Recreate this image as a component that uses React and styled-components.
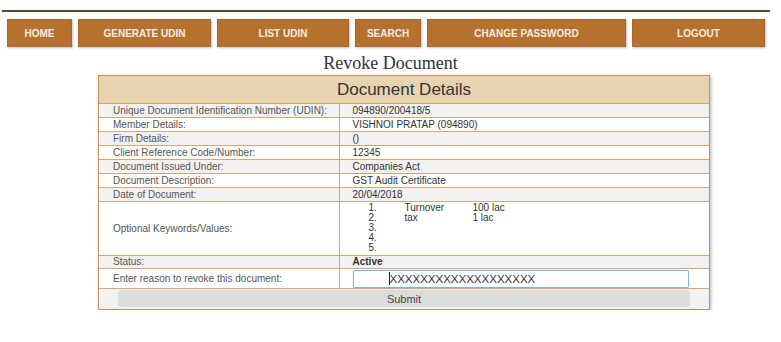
import styled, { createGlobalStyle } from 'styled-components';

const GlobalStyle = createGlobalStyle`
  body {
    margin: 0;
    background: #fff;
    font-family: "Liberation Sans", Arial, sans-serif;
  }
`;

const menu = [
  { label: 'HOME', width: 65 },
  { label: 'GENERATE UDIN', width: 133 },
  { label: 'LIST UDIN', width: 132 },
  { label: 'SEARCH', width: 66 },
  { label: 'CHANGE PASSWORD', width: 199 },
  { label: 'LOGOUT', width: 133 },
];

const details = [
  ['Unique Document Identification Number (UDIN):', '094890/200418/5'],
  ['Member Details:', 'VISHNOI PRATAP (094890)'],
  ['Firm Details:', '()'],
  ['Client Reference Code/Number:', '12345'],
  ['Document Issued Under:', 'Companies Act'],
  ['Document Description:', 'GST Audit Certificate'],
  ['Date of Document:', '20/04/2018'],
];

const keywords = [
  ['Turnover', '100 lac'],
  ['tax', '1 lac'],
  ['', ''],
  ['', ''],
  ['', ''],
];

export default function App() {
  return (
    <Page>
      <GlobalStyle />
      <HeaderLine />
      <Nav>
        {menu.map((m) => (
          <NavButton key={m.label} $w={m.width}>{m.label}</NavButton>
        ))}
      </Nav>
      <PageTitle>Revoke Document</PageTitle>
      <Panel>
        <Table>
          <colgroup>
            <col style={{ width: 240 }} />
            <col />
          </colgroup>
          <tbody>
            <tr>
              <HeadCell colSpan={2}>Document Details</HeadCell>
            </tr>
            {details.map(([label, value], i) => (
              <Row key={label} $alt={i % 2 === 0}>
                <Label>{label}</Label>
                <Value>{value}</Value>
              </Row>
            ))}
            <Row>
              <Label>Optional Keywords/Values:</Label>
              <Value>
                <KeyList>
                  {keywords.map(([k, v], i) => (
                    <KeyItem key={i}>
                      <KeyNum>{i + 1}.</KeyNum>
                      <KeyName>{k}</KeyName>
                      <span>{v}</span>
                    </KeyItem>
                  ))}
                </KeyList>
              </Value>
            </Row>
            <Row $alt $h={13}>
              <Label>Status:</Label>
              <Value><strong>Active</strong></Value>
            </Row>
            <Row $h={20}>
              <Label>Enter reason to revoke this document:</Label>
              <Value>
                <ReasonBox>
                  <Caret />XXXXXXXXXXXXXXXXXXX
                </ReasonBox>
              </Value>
            </Row>
            <Row $alt $h={20}>
              <SubmitCell colSpan={2}>
                <SubmitButton>Submit</SubmitButton>
              </SubmitCell>
            </Row>
          </tbody>
        </Table>
      </Panel>
    </Page>
  );
}

const Page = styled.div`
  padding-top: 10px;
  width: 781px;
`;

const HeaderLine = styled.div`
  height: 2px;
  margin: 0 11px 0 2px;
  background: #5c4a35;
`;

const Nav = styled.div`
  display: flex;
  gap: 6px;
  padding: 7px 0 0 7px;
`;

const NavButton = styled.div`
  width: ${(p) => p.$w}px;
  height: 28px;
  box-sizing: border-box;
  display: flex;
  align-items: center;
  justify-content: center;
  background: #b6712f;
  border: 1px solid #a9672b;
  box-shadow: 1px 1px 2px rgba(0, 0, 0, 0.25);
  color: #f6ece2;
  font-size: 10px;
  font-weight: bold;
`;

const PageTitle = styled.h1`
  margin: 6px 0 0;
  text-align: center;
  font-family: "Liberation Serif", "Times New Roman", serif;
  font-weight: normal;
  font-size: 18px;
  line-height: 21px;
  color: #333;
`;

const Panel = styled.div`
  width: 612px;
  margin: 1px 0 0 98px;
  border: 1px solid #c8915a;
  box-shadow: 1px 1px 3px rgba(0, 0, 0, 0.3);
  box-sizing: border-box;
`;

const Table = styled.table`
  width: 100%;
  border-collapse: collapse;
  table-layout: fixed;
  font-size: 10px;
  color: #444;
`;

const HeadCell = styled.th`
  height: 27px;
  padding: 0;
  background: #e8d3b0;
  border-bottom: 1px solid #d6a26c;
  font-size: 17px;
  font-weight: normal;
  color: #333;
`;

const Row = styled.tr`
  background: ${(p) => (p.$alt ? '#f2f2f2' : '#fff')};
  height: ${(p) => p.$h || 14}px;
  & > td {
    border-bottom: 1px solid #d9a774;
  }
  &:last-child > td {
    border-bottom: none;
  }
`;

const Label = styled.td`
  padding: 0 0 0 14px;
  border-right: 1px solid #d9a774;
  color: #555;
  line-height: 12px;
`;

const Value = styled.td`
  padding: 0 0 0 13px;
  color: #333;
  line-height: 12px;
`;

const KeyList = styled.div`
  display: flex;
  flex-direction: column;
  padding: 1px 0 2px 16px;
`;

const KeyItem = styled.div`
  display: flex;
  line-height: 10px;
`;

const KeyNum = styled.span`
  width: 36px;
`;

const KeyName = styled.span`
  width: 68px;
`;

const ReasonBox = styled.div`
  width: 336px;
  height: 18px;
  box-sizing: border-box;
  border: 1px solid #86b0e6;
  box-shadow: 0 0 1px #9cc0ee;
  border-radius: 2px;
  background: #fff;
  padding-left: 35px;
  display: flex;
  align-items: center;
  font-size: 11.5px;
  color: #333;
`;

const Caret = styled.span`
  width: 1px;
  height: 13px;
  background: #222;
`;

const SubmitCell = styled.td`
  padding: 1px 0 1px 19px;
`;

const SubmitButton = styled.div`
  width: 572px;
  height: 17px;
  box-sizing: border-box;
  display: flex;
  align-items: center;
  justify-content: center;
  background: #dcdcdc;
  border: 1px solid #cfe0e4;
  border-radius: 3px;
  color: #444;
  font-size: 11px;
`;
